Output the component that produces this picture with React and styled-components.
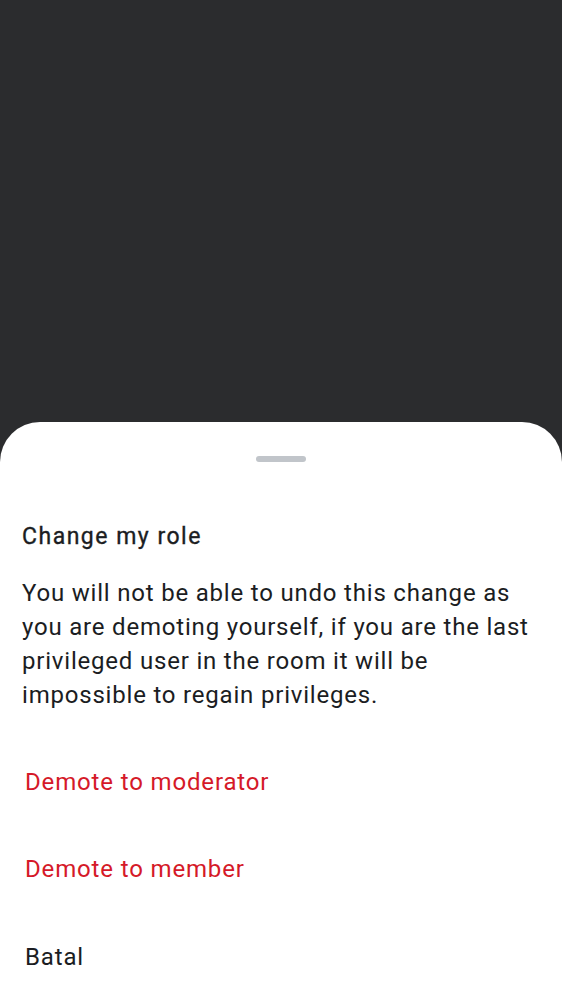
import React from "react";
import styled, { createGlobalStyle } from "styled-components";

const GlobalStyle = createGlobalStyle`
  html, body {
    margin: 0;
    padding: 0;
    background: #2b2c2e;
    font-family: Roboto, "Noto Sans", sans-serif;
  }
`;

const Screen = styled.div`
  height: 100vh;
  display: flex;
  flex-direction: column;
  background-color: #2b2c2e;
  overflow: hidden;
`;

const Backdrop = styled.div`
  flex: 1;
`;

const Sheet = styled.div`
  height: 578px;
  flex-shrink: 0;
  box-sizing: border-box;
  background: #ffffff;
  border-radius: 40px 40px 0 0;
  display: flex;
  flex-direction: column;
  padding-top: 34px;
  & > * {
    flex-shrink: 0;
  }
`;

const Handle = styled.div`
  align-self: center;
  width: 50px;
  height: 6px;
  border-radius: 3px;
  background: #c1c5ca;
`;

const Title = styled.h2`
  margin: 60px 0 0;
  padding: 0 22px;
  font-size: 23px;
  line-height: 30px;
  font-weight: 400;
  letter-spacing: 1.5px;
  -webkit-text-stroke: 0.35px #1b1d22;
  color: #1b1d22;
`;

const Description = styled.p`
  margin: 24px 0 0;
  padding: 0 22px;
  font-size: 24px;
  line-height: 34px;
  font-weight: 400;
  color: #1b1d22;
  letter-spacing: 0.8px;
`;

const Options = styled.div`
  margin-top: 26px;
  display: flex;
  flex-direction: column;
`;

const Option = styled.button`
  height: 87.5px;
  border: none;
  background: transparent;
  text-align: left;
  padding: 0 25px;
  font-family: inherit;
  font-size: 24px;
  font-weight: 400;
  letter-spacing: 0.85px;
  color: ${(p) => (p.$danger ? "#d51928" : "#1b1d22")};
  cursor: pointer;
`;

const App = () => {
  return (
    <Screen>
      <GlobalStyle />
      <Backdrop />
      <Sheet>
        <Handle />
        <Title>Change my role</Title>
        <Description>
          You will not be able to undo this change as you are demoting
          yourself, if you are the last privileged user in the room it will be
          impossible to regain privileges.
        </Description>
        <Options>
          <Option $danger>Demote to moderator</Option>
          <Option $danger>Demote to member</Option>
          <Option>Batal</Option>
        </Options>
      </Sheet>
    </Screen>
  );
};

export default App;
